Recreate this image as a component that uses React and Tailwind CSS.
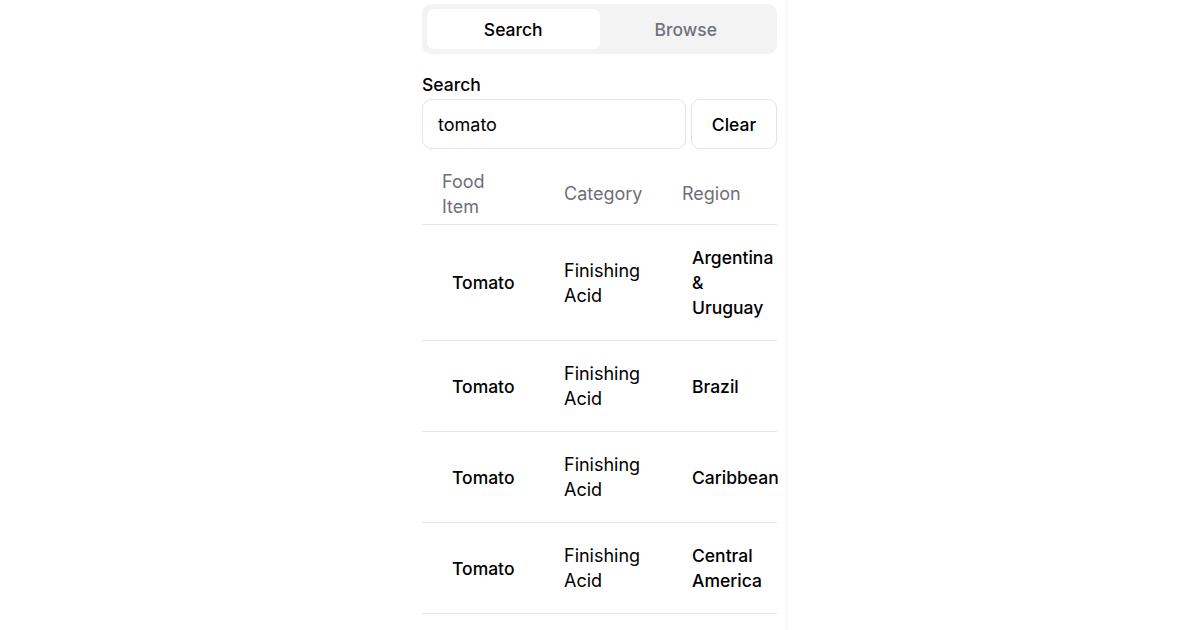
export default function App() {
  const rows = [
    { food: "Tomato", category: "Finishing Acid", region: "Argentina & Uruguay" },
    { food: "Tomato", category: "Finishing Acid", region: "Brazil" },
    { food: "Tomato", category: "Finishing Acid", region: "Caribbean" },
    { food: "Tomato", category: "Finishing Acid", region: "Central America" },
  ];

  return (
    <div
      className="min-h-[630px] w-full bg-white text-[18px] leading-[25px] text-black"
      style={{ fontFamily: "Inter, 'Noto Sans', sans-serif" }}
    >
      <div className="mx-auto h-[630px] w-[376px] overflow-hidden border-r border-[#f6f6f6] pl-[10px] pr-[11px] pt-[4px]">
        <div className="w-[355px]">
          {/* Tabs */}
          <div className="flex h-[50px] rounded-[9px] bg-[#f3f3f3] p-[5px]">
            <button className="flex-1 rounded-[7px] bg-white pt-[1px] text-[17.5px] font-medium text-black">
              Search
            </button>
            <button className="flex-1 rounded-[7px] pt-[1px] text-[17.5px] font-medium text-[#71717a]">
              Browse
            </button>
          </div>

          {/* Search field */}
          <label className="mt-[18px] block text-[17.5px] font-medium leading-[25px]">
            Search
          </label>
          <div className="mt-[2px] flex gap-[5px]">
            <input
              readOnly
              value="tomato"
              className="h-[50px] w-[264px] rounded-[9px] border border-[#e4e4e4] px-[15px] pt-[1px] text-[18px] outline-none"
            />
            <button className="h-[50px] flex-1 rounded-[9px] border border-[#e4e4e4] pt-[1px] text-[17.5px] font-medium">
              Clear
            </button>
          </div>

          {/* Results */}
          <table className="mt-[19px] w-[355px] table-fixed border-collapse">
            <colgroup>
              <col className="w-[122px]" />
              <col className="w-[118px]" />
              <col className="w-[115px]" />
            </colgroup>
            <thead>
              <tr className="border-b border-[#e5e5e5]">
                <th className="pb-[5px] pl-[20px] pt-[1px] text-left align-middle font-normal text-[#6f6f78]">
                  <span className="block w-[60px]">Food Item</span>
                </th>
                <th className="pb-[6px] pl-[20px] text-left align-middle font-normal text-[#6f6f78]">
                  Category
                </th>
                <th className="pb-[6px] pl-[20px] text-left align-middle font-normal text-[#6f6f78]">
                  Region
                </th>
              </tr>
            </thead>
            <tbody>
              {rows.map((r) => (
                <tr key={r.region} className="border-b border-[#e5e5e5]">
                  <td className="py-[20px] pl-[30px] align-middle text-[17.5px] font-medium">
                    {r.food}
                  </td>
                  <td className="py-[20px] pl-[20px] pr-[20px] align-middle">{r.category}</td>
                  <td className="py-[20px] pl-[30px] pr-0 align-middle text-[17.5px] font-medium">
                    <span className="block w-[86px]">{r.region}</span>
                  </td>
                </tr>
              ))}
            </tbody>
          </table>
        </div>
      </div>
    </div>
  );
}
